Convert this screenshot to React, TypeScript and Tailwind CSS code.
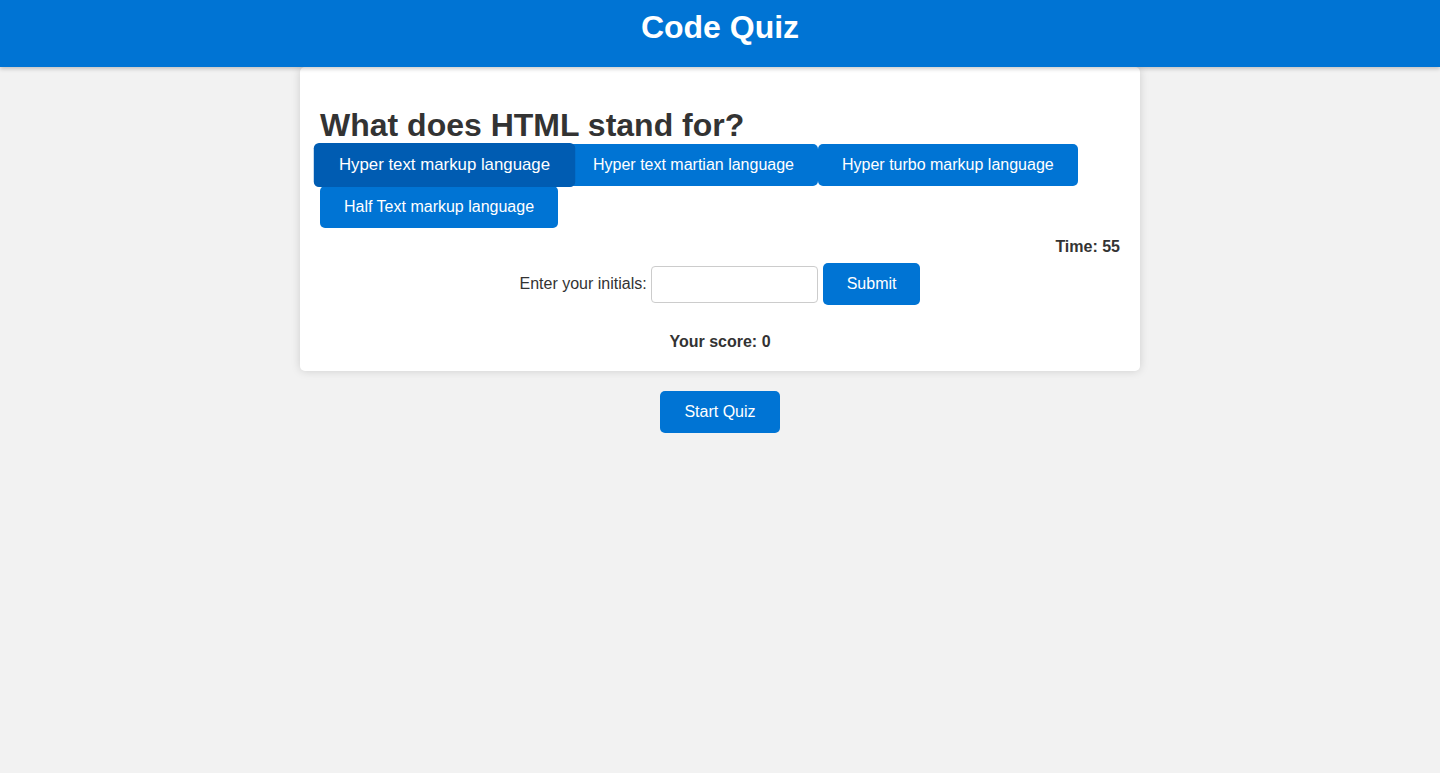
import React from 'react';

const answers = [
  'Hyper text markup language',
  'Hyper text martian language',
  'Hyper turbo markup language',
  'Half Text markup language',
];

export default function App() {
  return (
    <div
      className="min-h-screen bg-[#f2f2f2] text-[#333]"
      style={{ fontFamily: '"Liberation Sans", Arial, sans-serif' }}
    >
      <header className="bg-[#0074d4] pt-[9px] pb-[21px] text-center shadow-[0_2px_4px_rgba(0,0,0,0.2)] relative z-10">
        <h1 className="text-[32px] leading-[37px] font-bold text-white">Code Quiz</h1>
      </header>

      <main className="w-[840px] mx-auto bg-white rounded-[5px] shadow-[0_0_10px_rgba(0,0,0,0.15)] px-5 pt-5 pb-5">
        <h2 className="text-[32px] leading-[37px] font-bold mt-[20px]">
          What does HTML stand for?
        </h2>
        <div className="flex flex-wrap">
          {answers.map((a, i) => (
            <button
              key={a}
              className={
                i === 0
                  ? 'relative z-10 scale-[1.05] bg-[#005cb2] text-white text-base leading-[18px] px-6 py-3 rounded-[5px]'
                  : 'bg-[#0074d4] text-white text-base leading-[18px] px-6 py-3 rounded-[5px]'
              }
            >
              {a}
            </button>
          ))}
        </div>

        <div className="mt-[10px] text-right font-bold text-base leading-[18px]">Time: 55</div>

        <div className="mt-[7px] flex items-center justify-center h-[42px]">
          <label className="text-base leading-[18px] mr-[4px]">Enter your initials:</label>
          <input
            type="text"
            className="w-[167px] h-[37px] border border-[#ccc] rounded-[4px] px-2 mr-[5px] outline-none"
          />
          <button className="bg-[#0074d4] text-white text-base leading-[18px] px-6 py-3 rounded-[5px]">
            Submit
          </button>
        </div>

        <p className="mt-[28px] text-center font-bold text-base leading-[18px]">Your score: 0</p>
      </main>

      <div className="mt-5 flex justify-center">
        <button className="bg-[#0074d4] text-white text-base leading-[18px] px-6 py-3 rounded-[5px]">
          Start Quiz
        </button>
      </div>
    </div>
  );
}
